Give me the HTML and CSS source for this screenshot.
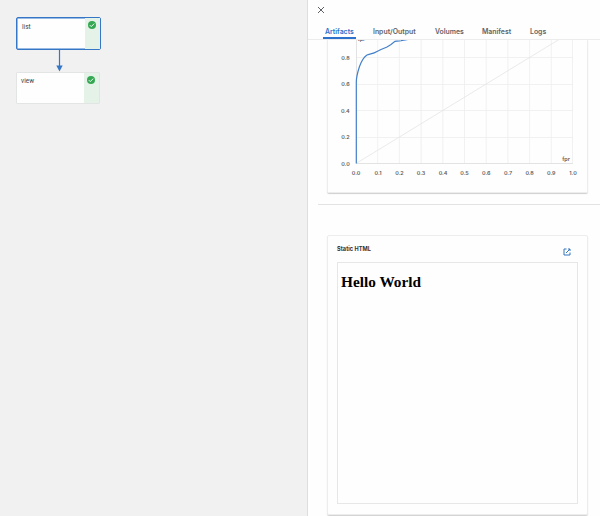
FILE: index.html
```html
<!DOCTYPE html>
<html lang="en">
<head>
<meta charset="utf-8">
<title>Run details</title>
<link rel="stylesheet" href="styles.css">
</head>
<body>
<div class="app">
  <main class="graph">
    <div class="node node-selected">
      <span class="node-label">list</span>
      <span class="node-status"><svg class="check" viewBox="0 0 20 20"><circle cx="10" cy="10" r="10"/><path d="M4.5 10.3l3.7 3.7 7.3-7.4"/></svg></span>
    </div>
    <svg class="edge" viewBox="0 0 8 22"><path class="edge-line" d="M4.5 0V16"/><path class="edge-head" d="M1.3 15.5h6.4L4.5 21.5z"/></svg>
    <div class="node">
      <span class="node-label">view</span>
      <span class="node-status"><svg class="check" viewBox="0 0 20 20"><circle cx="10" cy="10" r="10"/><path d="M4.5 10.3l3.7 3.7 7.3-7.4"/></svg></span>
    </div>
  </main>
  <aside class="panel">
    <header class="panel-head">
      <svg class="close" viewBox="0 0 8 8"><path d="M1 1l6 6M7 1L1 7"/></svg>
      <nav class="tabs">
        <span class="tab tab-active">Artifacts</span>
        <span class="tab tab-io">Input/Output</span>
        <span class="tab tab-volumes">Volumes</span>
        <span class="tab tab-manifest">Manifest</span>
        <span class="tab">Logs</span>
      </nav>
    </header>
    <section class="card card-chart">
      <svg class="chart" viewBox="327 40 260 153">
        <path class="grid" d="M377.7 40V163.5M399.4 40V163.5M421.1 40V163.5M442.8 40V163.5M464.5 40V163.5M486.2 40V163.5M507.9 40V163.5M529.6 40V163.5M551.3 40V163.5M572.5 40V163.5M356 137.5H573M356 110.5H573M356 84.5H573M356 57.5H573"/>
        <path class="axis" d="M356 163.5H573M356.5 40V163.5"/>
        <path class="diagonal" d="M356 163.5L559 39.5"/>
        <path class="roc" d="M356.3 163.5V82C356.4 76 358 71 359.5 66.5C361.5 61 364 57 367 55C370 54 374 53.5 377 51.5L381 49.5L387 47L391 44.5L395 41.3L401 40.6L408 39.5"/>
        <g class="ticks ticks-y"><text x="349.7" y="59.8">0.8</text><text x="349.7" y="86.3">0.6</text><text x="349.7" y="112.8">0.4</text><text x="349.7" y="139.3">0.2</text><text x="349.7" y="165.8">0.0</text></g>
        <g class="ticks ticks-x"><text x="356" y="174.5">0.0</text><text x="378" y="174.5">0.1</text><text x="399.5" y="174.5">0.2</text><text x="421" y="174.5">0.3</text><text x="443" y="174.5">0.4</text><text x="464.5" y="174.5">0.5</text><text x="486.3" y="174.5">0.6</text><text x="508" y="174.5">0.7</text><text x="529.6" y="174.5">0.8</text><text x="551.3" y="174.5">0.9</text><text x="573" y="174.5">1.0</text><text x="566" y="161">fpr</text><text x="361.5" y="40.7">tpr</text></g>
      </svg>
    </section>
    <hr class="divider">
    <section class="card card-html">
      <div class="card-head">
        <h2 class="card-title">Static HTML</h2>
        <svg class="open" viewBox="0 0 8 8"><path d="M3.5 1H1v6h6V4.5M5 1h2v2M7 1L3 5"/></svg>
      </div>
      <div class="frame"><h1 class="hello">Hello World</h1></div>
    </section>
  </aside>
</div>
</body>
</html>
```
FILE: styles.css
```css
* { box-sizing: border-box; }
body { margin: 0; font-family: Inter, Roboto, sans-serif; color: #3c4043; }
.app { display: flex; width: 600px; height: 516px; overflow: hidden; background: #fefefe; }
.graph { width: 307px; padding: 17px 0 0 16px; background: #f1f1f1; }
.node { display: flex; justify-content: space-between; width: 84px; height: 32px; background: #fefefe; border: 1px solid #e3e5e4; border-radius: 1px; }
.node-selected { width: 85px; height: 33px; border-color: #3576c7; border-radius: 2px; box-shadow: inset 0 0 0 .5px #3576c7; }
.node-label { padding: 4px 0 0 4px; font-family: Roboto, sans-serif; font-size: 6.5px; line-height: 9px; }
.node-selected .node-label { padding: 5px 0 0 5px; }
.node-status { display: flex; width: 15px; padding: 3px 0 0 3px; background: #e4f2e7; }
.check { width: 8px; height: 8px; fill: #34a853; }
.check path { fill: none; stroke: #fff; stroke-width: 2.3; }
.edge { display: block; width: 8px; height: 22px; margin-left: 39px; }
.edge-line { fill: none; stroke: #3576c7; stroke-width: 1.2; }
.edge-head { fill: #3576c7; }
.panel { width: 293px; border-left: 1px solid #dedede; }
.panel-head { height: 40px; padding: 6px 0 0 9px; border-bottom: 1px solid #ececec; }
.close { display: block; width: 8px; height: 8px; fill: none; stroke: #5f6368; stroke-width: 1; }
.tabs { display: flex; margin: 11px 0 0 6px; font-size: 6.9px; font-weight: 600; line-height: 13px; color: #5f6368; white-space: nowrap; }
.tab { height: 14px; }
.tab-active { width: 33px; margin-right: 17px; padding-left: 2px; color: #2c71cb; border-bottom: 2px solid #2c71cb; }
.tab-io { width: 62px; }
.tab-volumes { width: 47px; }
.tab-manifest { width: 48px; }
.card { width: 261px; margin-left: 19px; border: 1px solid #ededed; box-shadow: 0 1px 1px #cfcfcf; border-radius: 2px; }
.card-chart { height: 153px; border-top: 0; border-radius: 0 0 2px 2px; }
.chart { display: block; width: 260px; height: 153px; margin-left: -1px; }
.chart path { fill: none; }
.chart .grid { stroke: #ededed; stroke-width: .8; }
.chart .axis { stroke: #dcdcdc; stroke-width: .8; }
.chart .diagonal { stroke: #e5e5e5; stroke-width: .8; }
.chart .roc { stroke: #4380c9; stroke-width: 1.2; }
.ticks { font-size: 5.4px; font-weight: 600; fill: #606060; }
.ticks-y { text-anchor: end; }
.ticks-x { text-anchor: middle; }
.divider { height: 1px; margin: 11px 0 30px 10px; border: 0; background: #e3e3e3; }
.card-html { height: 280px; padding: 0 9px; }
.card-head { display: flex; justify-content: space-between; height: 26px; padding: 8px 7px 0 0; }
.card-title { margin: 0; font-size: 5.6px; line-height: 10px; font-weight: 700; letter-spacing: .05px; color: #303134; }
.open { width: 8px; height: 8px; margin-top: 3.5px; fill: none; stroke: #3477bd; stroke-width: 1; }
.frame { height: 242px; padding: 10px 0 0 3px; border: 1px solid #e7e7e7; }
.hello { margin: 0; font: bold 15.3px/18px "Liberation Serif", serif; color: #000; }
```
